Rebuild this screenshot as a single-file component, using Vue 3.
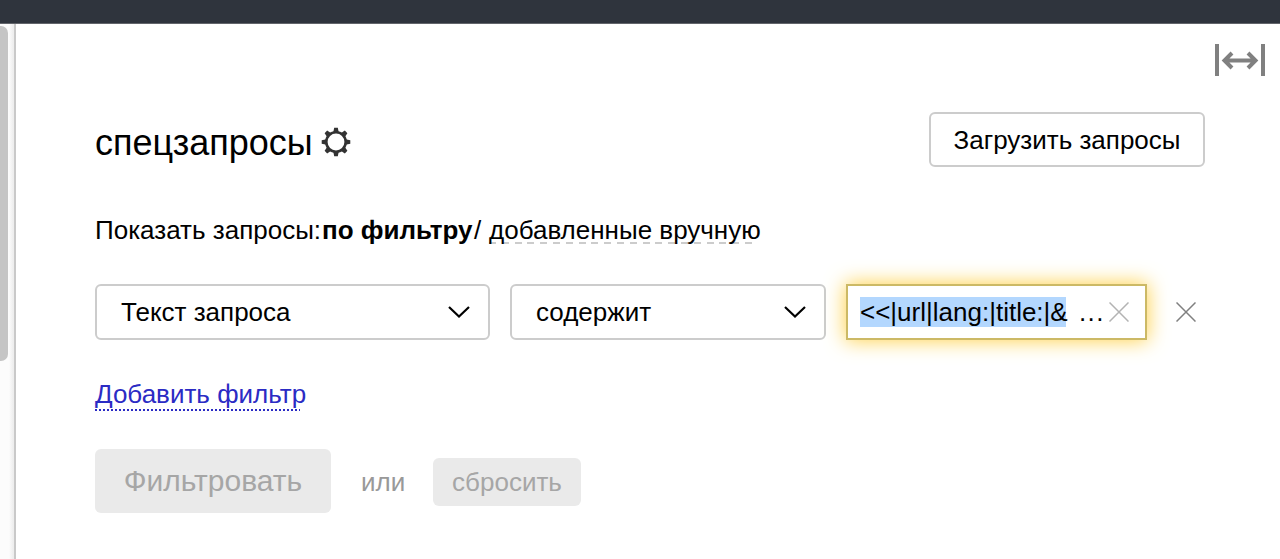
<template>
  <div class="page">
    <header class="topbar"></header>
    <div class="body">
      <aside class="rail">
        <div class="rail-thumb"></div>
      </aside>
      <main class="content">
        <div class="toolbar">
          <svg class="icon-resize" width="50" height="32" viewBox="0 0 50 32">
            <path d="M2 0V32M48 0V32" stroke-width="4" />
            <path d="M10 16.5H40M17 9L9.5 16.5L17 24M33 9L40.500 16.500L33 24" stroke-width="4" />
          </svg>
        </div>

        <div class="heading">
          <h1 class="title">спецзапросы</h1>
          <svg class="icon-gear" width="30" height="30" viewBox="-15 -15 30 30">
            <circle r="9.700" />
            <path
              v-for="angle in teeth"
              :key="angle"
              d="M-2.800 -9.500L-1.800 -14.300H1.800L2.800 -9.500Z"
              :transform="`rotate(${angle})`"
            />
          </svg>
          <button class="button upload"><span class="upload-text">Загрузить запросы</span></button>
        </div>

        <div class="modes">
          <span class="modes-label">Показать запросы:</span>
          <b class="modes-current">по фильтру</b>
          <span class="modes-slash">/</span>
          <a class="modes-link">добавленные вручную</a>
        </div>

        <div class="filter">
          <div v-for="item in selects" :key="item.name" class="select" :class="item.name">
            <span class="select-text">{{ item.text }}</span>
            <svg width="22" height="12" viewBox="0 0 22 12">
              <path d="M1 1L11 10.500L21 1" />
            </svg>
          </div>
          <div class="input">
            <span class="input-value">{{ query }}</span>
            <span class="input-more">...</span>
            <svg class="cross cross-clear" width="20" height="20" viewBox="0 0 20 20">
              <path d="M.5 .5L19.500 19.500M19.500 .5L.5 19.500" />
            </svg>
          </div>
          <svg class="cross cross-remove" width="20" height="20" viewBox="0 0 20 20">
            <path d="M.5 .5L19.500 19.500M19.500 .5L.5 19.500" />
          </svg>
        </div>

        <a class="add">Добавить фильтр</a>

        <div class="actions">
          <button class="disabled submit" disabled>Фильтровать</button>
          <span class="or">или</span>
          <button class="disabled reset" disabled>сбросить</button>
        </div>
      </main>
    </div>
  </div>
</template>

<script setup>
import { ref } from 'vue'

const teeth = [0, 45, 90, 135, 180, 225, 270, 315]

const selects = [
  { name: 'field', text: 'Текст запроса' },
  { name: 'condition', text: 'содержит' }
]

const query = ref('<<|url|lang:|title:|&')
</script>

<style>
body {
  margin: 0;
  overflow: hidden;
}
</style>

<style scoped>
.page {
  display: flex;
  flex-direction: column;
  width: 1280px;
  height: 559px;
  background: #fff;
  color: #000;
  font-family: "Liberation Sans", Arial, sans-serif;
  font-size: 26px;
  line-height: 30px;
  white-space: nowrap;
}

.topbar {
  height: 24px;
  background: #2f343d;
  border-bottom: 1px solid #62656b;
  box-sizing: border-box;
  flex: none;
}

.body {
  display: flex;
  flex: 1;
}

.rail {
  box-sizing: border-box;
  width: 16px;
  padding-top: 2px;
  background: linear-gradient(90deg, #fcfcfc 9px, #eee 13px);
  border-right: 2px solid #c9c9c9;
}

.rail-thumb {
  width: 8px;
  height: 335px;
  background: #c5c5c5;
  border-radius: 0 7px 7px 0;
}

.content {
  flex: 1;
  padding-left: 79px;
}

.toolbar {
  display: flex;
  justify-content: flex-end;
  height: 68px;
  padding: 20px 15px 0 0;
  box-sizing: border-box;
}

.icon-resize {
  fill: none;
  stroke: #808080;
}

.heading {
  display: flex;
  align-items: center;
  width: 1110px;
  height: 55px;
  margin-top: 20px;
}

.title {
  width: 213px;
  margin: 6px 13px 0 0;
  font-size: 36px;
  font-weight: normal;
  line-height: 42px;
}

.icon-gear {
  margin-top: 4px;
  fill: #333;
}

.icon-gear circle {
  fill: none;
  stroke: #333;
  stroke-width: 2.6;
}

.button,
.disabled {
  box-sizing: border-box;
  padding: 0;
  font: inherit;
  border: none;
}

.upload {
  width: 276px;
  height: 55px;
  margin-left: auto;
  background: #fff;
  border: 2px solid #ccc;
  border-radius: 6px;
  color: #000;
}

.modes {
  display: flex;
  height: 30px;
  margin-top: 48px;
}

.modes-label {
  width: 227px;
}

.modes-current {
  width: 152px;
}

.modes-slash {
  width: 15px;
}

.modes-link {
  width: 264px;
  height: 29px;
  background: repeating-linear-gradient(90deg, #ccc 0 7px, transparent 7px 12.8px) bottom / 100% 2px no-repeat;
}

.filter {
  display: flex;
  align-items: center;
  height: 56px;
  margin-top: 39px;
}

.select {
  display: flex;
  align-items: center;
  justify-content: space-between;
  box-sizing: border-box;
  height: 56px;
  margin-right: 20px;
  padding: 0 18px 0 24px;
  border: 2px solid #ccc;
  border-radius: 6px;
}

.select svg {
  fill: none;
  stroke: #000;
  stroke-width: 2.2;
}

.field {
  width: 395px;
}

.condition {
  width: 316px;
}

.input {
  display: flex;
  align-items: center;
  box-sizing: border-box;
  width: 301px;
  height: 56px;
  padding-left: 12px;
  background: #fff;
  border: 2px solid #ccb965;
  box-shadow: 0 0 20px 1px #ffd24d;
}

.input-value {
  width: 206px;
  background: #b3d7fe;
}

.input-more {
  width: 25px;
  margin-left: 13px;
  letter-spacing: 1.4px;
}

.cross {
  fill: none;
  stroke-width: 1.5;
}

.cross-clear {
  margin-left: 5px;
  stroke: #b3b3b3;
}

.cross-remove {
  margin-left: 29px;
  stroke: #808080;
}

.add {
  display: block;
  width: 205px;
  height: 32px;
  margin-top: 39px;
  color: #2b2bc4;
  background: repeating-linear-gradient(90deg, #2b2bc4 0 2px, transparent 2px 4px) bottom / 100% 2px no-repeat;
}

.actions {
  display: flex;
  align-items: center;
  height: 64px;
  margin-top: 38px;
}

.disabled {
  background: #eaeaea;
  border-radius: 6px;
  color: #a6a6a6;
}

.submit {
  width: 236px;
  height: 64px;
  font-size: 30px;
}

.or {
  width: 43px;
  margin: 2px 29px 0 30px;
  color: #999;
}

.reset {
  width: 148px;
  height: 48px;
  margin-top: 2px;
}
</style>
